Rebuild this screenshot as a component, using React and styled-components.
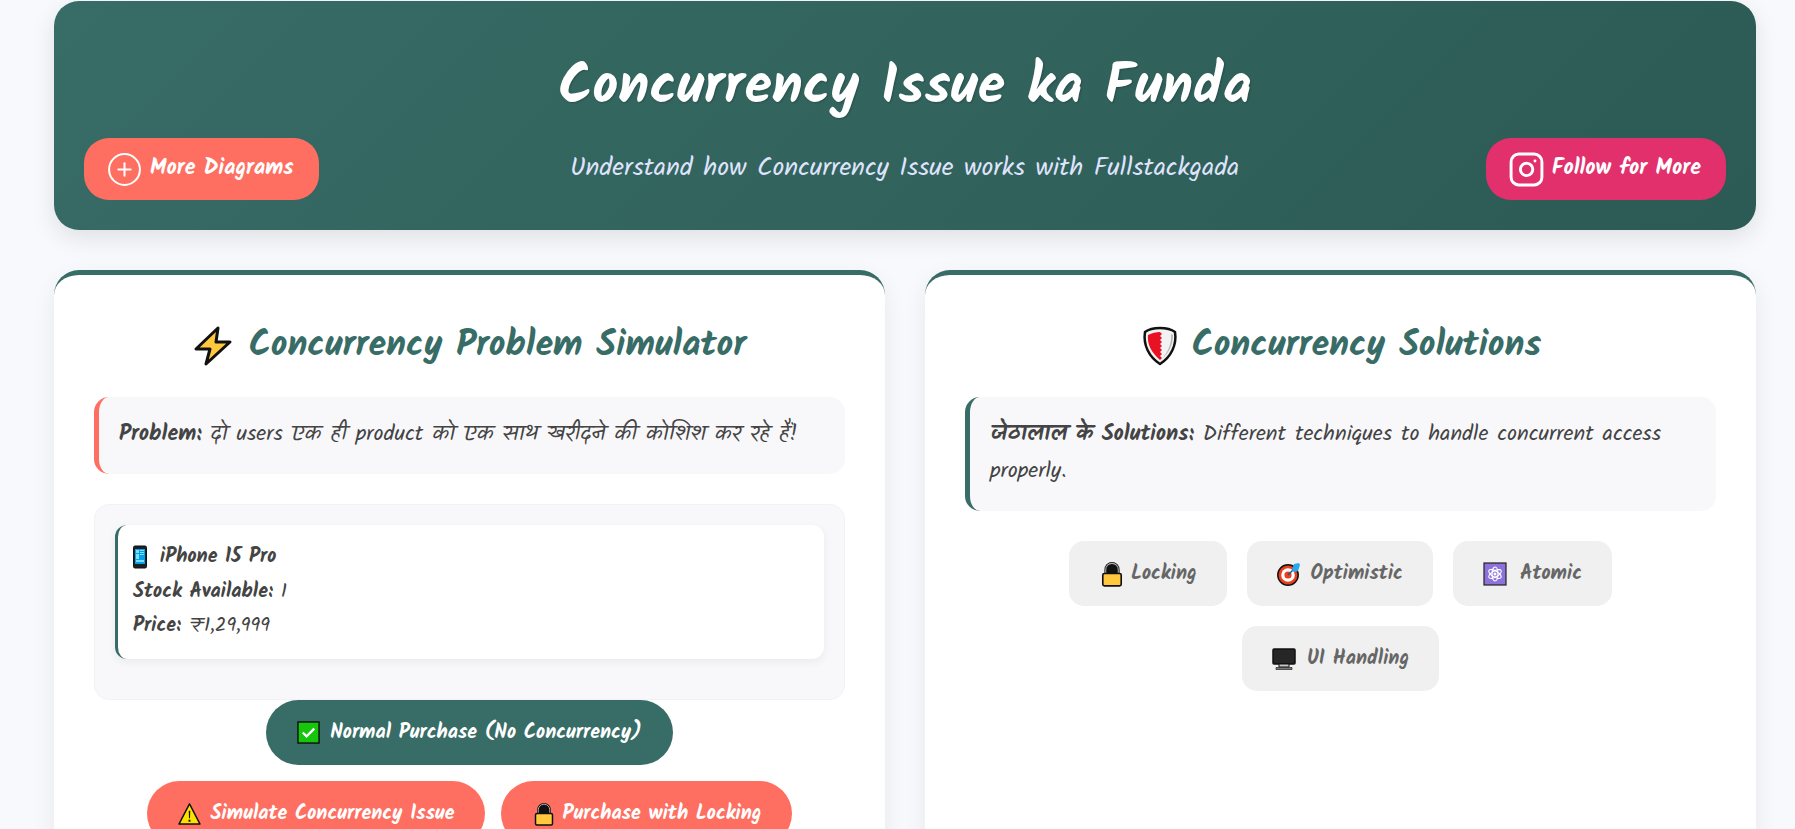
import React from 'react';
import styled, { createGlobalStyle } from 'styled-components';
import { CirclePlus, Instagram } from 'lucide-react';

const GlobalStyle = createGlobalStyle`
  * {
    box-sizing: border-box;
  }

  html, body {
    margin: 0;
    height: 829px;
    overflow: hidden;
    background: #f8f9fc;
    color: #444;
    font-family: "Kalam", "Noto Sans", sans-serif;
    line-height: 1.8;
  }
`;

const Page = styled.div`
  padding: 1px 39px 30px 54px;
`;

const Header = styled.header`
  padding: 37px 30px 30px;
  margin-bottom: 40px;
  border-radius: 25px;
  background: linear-gradient(135deg, #386c66 0%, #2c5a54 100%);
  box-shadow: 0 8px 25px rgba(0, 0, 0, 0.1);
  text-align: center;
`;

const Title = styled.h1`
  margin: 0;
  font-size: 56px;
  line-height: 100px;
  font-weight: 700;
  color: #fff;
  text-shadow: 1px 1px 2px rgba(0, 0, 0, 0.2);
`;

const HeaderRow = styled.div`
  display: flex;
  align-items: center;
  justify-content: space-between;
`;

const Subtitle = styled.p`
  margin: 0 0 2px 5px;
  font-size: 26px;
  color: #dfe3fb;
`;

const HeaderLink = styled.a`
  display: flex;
  align-items: center;
  gap: 7px;
  height: 62px;
  padding: 0 25px 0 22px;
  border-radius: 25px;
  background: ${(props) => props.$bg};
  color: #fff;
  font-size: 22px;
  font-weight: 700;
`;

const Columns = styled.main`
  display: grid;
  grid-template-columns: 831px 831px;
  gap: 40px;
`;

const Card = styled.section`
  padding: 39px 40px 40px;
  border-top: 5px solid #386c66;
  border-radius: 25px;
  background: #fff;
  box-shadow: 0 8px 25px rgba(0, 0, 0, 0.07);
`;

const CardTitle = styled.h2`
  display: flex;
  align-items: center;
  justify-content: center;
  gap: ${(props) => props.$gap};
  margin: 0 0 20px;
  font-size: 36px;
  line-height: 63px;
  font-weight: 700;
  color: #386c66;
`;

const Callout = styled.div`
  padding: 19px 20px 21px;
  margin-bottom: 30px;
  border-left: 5px solid ${(props) => props.$accent};
  border-radius: 15px;
  background: #f8f8fb;
  font-size: 22px;
  line-height: 37px;
`;

const StockBox = styled.div`
  padding: 20px;
  border: 1px solid #f1f1f7;
  border-radius: 15px;
  background: #f8f8fb;
`;

const Product = styled.div`
  padding: 15px 15px 16px;
  margin-bottom: 20px;
  border-left: 3px solid #386c66;
  border-radius: 12px;
  background: #fff;
  box-shadow: 0 3px 10px rgba(0, 0, 0, 0.06);
  font-size: 20px;
`;

const ProductLine = styled.div`
  display: flex;
  align-items: center;
  gap: ${(props) => props.$gap || '8px'};
  height: 34.4px;
`;

const Actions = styled.div`
  display: flex;
  flex-wrap: wrap;
  justify-content: center;
  gap: 16px;
`;

const ActionRow = styled.div`
  display: flex;
  justify-content: center;
  gap: 16px;
  width: 100%;
`;

const ActionButton = styled.button`
  display: flex;
  align-items: center;
  gap: ${(props) => props.$gap || '10px'};
  height: 65px;
  padding: 0 31px;
  border: 0;
  border-radius: 33px;
  background: ${(props) => props.$bg};
  color: #fff;
  font-family: inherit;
  font-size: 20px;
  font-weight: 700;
`;

const Tabs = styled.div`
  display: flex;
  flex-wrap: wrap;
  justify-content: center;
  gap: 20px;
`;

const Tab = styled.div`
  display: flex;
  align-items: center;
  gap: ${(props) => props.$gap};
  height: 65px;
  padding: 0 30px;
  border-radius: 15px;
  background: #f0f0f0;
  color: #666;
  font-size: 20px;
  font-weight: 700;
`;

const Emoji = styled.svg`
  flex: none;
  display: block;
`;

const Bolt = ({ size }) => (
  <Emoji width={size} height={size} viewBox="0 0 40 40">
    <path d="M25 2 3 23h14l-4 15 24-22H23z" fill="#ffc83d" stroke="#111" strokeWidth="3" strokeLinejoin="round" />
  </Emoji>
);

const Shield = ({ size }) => (
  <Emoji width={size} height={size} viewBox="0 0 40 40">
    <path d="M20 2c6 0 11 1 15 4 2 13-4 25-15 32C9 31 3 19 5 6c4-3 9-4 15-4z" fill="#f2f2f2" stroke="#111" strokeWidth="2.5" strokeLinejoin="round" />
    <path d="M31 8c1 9-3 18-9 25 7-6 11-15 11-24z" fill="#b5b5b5" />
    <path d="M20 6c-4 0-8 1-12 3-1 9 3 17 12 25l2-2-2-2 2-2-2-2 2-2-2-2 2-2-2-2 2-2-2-2 2-2-2-2 2-2z" fill="#e81224" />
  </Emoji>
);

const Phone = ({ size }) => (
  <Emoji width={(size * 14) / 24} height={size} viewBox="5 0 14 24">
    <rect x="5.5" y="1" width="13" height="22" rx="1.5" fill="#1f1f1f" stroke="#111" />
    <rect x="7" y="4" width="10" height="15" fill="#00a2e8" />
    <path d="M8 5h3v3H8zM8 9h3v5H8zM12 5h4v1h-4zM12 7h4v1h-4zM12 9h4v1h-4zM8 15h8v2H8z" fill="#7fdcff" />
  </Emoji>
);

const Check = ({ size }) => (
  <Emoji width={size} height={size} viewBox="0 0 24 24">
    <rect x="1" y="1" width="22" height="22" fill="#16c60c" stroke="#111" strokeWidth="1.5" />
    <path d="m6 12 4 4 8-8" fill="none" stroke="#fff" strokeWidth="2.4" />
  </Emoji>
);

const Warning = ({ size }) => (
  <Emoji width={size} height={size} viewBox="0 0 24 24">
    <path d="M12 2 1 23h22z" fill="#fce100" stroke="#111" strokeWidth="1.5" strokeLinejoin="round" />
    <path d="M11.2 9h1.6l-.3 8h-1zM11 18.5h2v2h-2z" fill="#111" />
  </Emoji>
);

const Lock = ({ size }) => (
  <Emoji width={size} height={size} viewBox="0 0 24 24">
    <path d="M5 14V8a7 7 0 0 1 14 0v6z" fill="#111" />
    <path d="M6.2 13V8a5.8 5.8 0 0 1 11.6 0v5" fill="#111" stroke="#aaa" strokeWidth="1" />
    <rect x="3.5" y="11.5" width="17" height="11.5" rx="1.5" fill="#ffc83d" stroke="#111" strokeWidth="1.5" />
  </Emoji>
);

const Target = ({ size }) => (
  <Emoji width={size} height={size} viewBox="0 0 24 24">
    <circle cx="11" cy="13" r="10.2" fill="#e8401c" stroke="#111" strokeWidth="1.5" />
    <circle cx="11" cy="13" r="6.8" fill="#fff" />
    <circle cx="11" cy="13" r="3.6" fill="#e8401c" />
    <path d="m11 13 6-6" stroke="#0c5f9e" strokeWidth="1.5" />
    <path d="m15 8 2-6 5-1 1 2-2 6-4 1z" fill="#2aa8ee" />
  </Emoji>
);

const Atom = ({ size }) => (
  <Emoji width={size} height={size} viewBox="0 0 24 24">
    <rect x="1" y="1" width="22" height="22" fill="#8e72dc" stroke="#222" strokeWidth="1.2" />
    <g fill="none" stroke="#fff" strokeWidth="1.2">
      <ellipse cx="12" cy="12" rx="3" ry="7" />
      <ellipse cx="12" cy="12" rx="3" ry="7" transform="rotate(60 12 12)" />
      <ellipse cx="12" cy="12" rx="3" ry="7" transform="rotate(120 12 12)" />
    </g>
    <circle cx="12" cy="12" r="1.5" fill="#fff" />
  </Emoji>
);

const Monitor = ({ size }) => (
  <Emoji width={size} height={size} viewBox="0 0 24 24">
    <rect x="1" y="2" width="22" height="15" rx="1" fill="#262626" stroke="#111" strokeWidth="1.5" />
    <path d="M7 17h10v3H7z" fill="#c8c8c8" stroke="#111" />
    <path d="M4 20.5h16v2H4z" fill="#777" stroke="#111" strokeWidth=".6" />
  </Emoji>
);

const solutions = [
  { label: 'Locking', Icon: Lock, size: 26, gap: '6px' },
  { label: 'Optimistic', Icon: Target, size: 24, gap: '10px' },
  { label: 'Atomic', Icon: Atom, size: 24, gap: '13px' },
  { label: 'UI Handling', Icon: Monitor, size: 24, gap: '11px' },
];

export default function App() {
  return (
    <>
      <GlobalStyle />
      <Page>
        <Header>
          <Title>Concurrency Issue ka Funda</Title>
          <HeaderRow>
            <HeaderLink $bg="#ff6f61">
              <CirclePlus size={37} strokeWidth={1.3} />
              More Diagrams
            </HeaderLink>
            <Subtitle>Understand how Concurrency Issue works with Fullstackgada</Subtitle>
            <HeaderLink $bg="#e1306c">
              <Instagram size={37} strokeWidth={1.9} />
              Follow for More
            </HeaderLink>
          </HeaderRow>
        </Header>

        <Columns>
          <Card>
            <CardTitle $gap="16px">
              <Bolt size={40} />
              Concurrency Problem Simulator
            </CardTitle>
            <Callout $accent="#ff6f61">
              <strong>Problem:</strong> दो users एक ही product को एक साथ खरीदने की कोशिश कर रहे हैं!
            </Callout>
            <StockBox>
              <Product>
                <ProductLine $gap="13px">
                  <Phone size={24} />
                  <strong>iPhone 15 Pro</strong>
                </ProductLine>
                <ProductLine>
                  <strong>Stock Available:</strong> 1
                </ProductLine>
                <ProductLine>
                  <strong>Price:</strong> ₹1,29,999
                </ProductLine>
              </Product>
            </StockBox>
            <Actions>
              <ActionButton $bg="#386c66">
                <Check size={23} />
                Normal Purchase (No Concurrency)
              </ActionButton>
              <ActionRow>
                <ActionButton $bg="#ff6f61">
                  <Warning size={23} />
                  Simulate Concurrency Issue
                </ActionButton>
                <ActionButton $bg="#ff6f61" $gap="6px">
                  <Lock size={24} />
                  Purchase with Locking
                </ActionButton>
              </ActionRow>
            </Actions>
          </Card>

          <Card>
            <CardTitle $gap="12px">
              <Shield size={40} />
              Concurrency Solutions
            </CardTitle>
            <Callout $accent="#386c66">
              <strong>जेठालाल के Solutions:</strong> Different techniques to handle concurrent access properly.
            </Callout>
            <Tabs>
              {solutions.map(({ label, Icon, size, gap }) => (
                <Tab key={label} $gap={gap}>
                  <Icon size={size} />
                  {label}
                </Tab>
              ))}
            </Tabs>
          </Card>
        </Columns>
      </Page>
    </>
  );
}
